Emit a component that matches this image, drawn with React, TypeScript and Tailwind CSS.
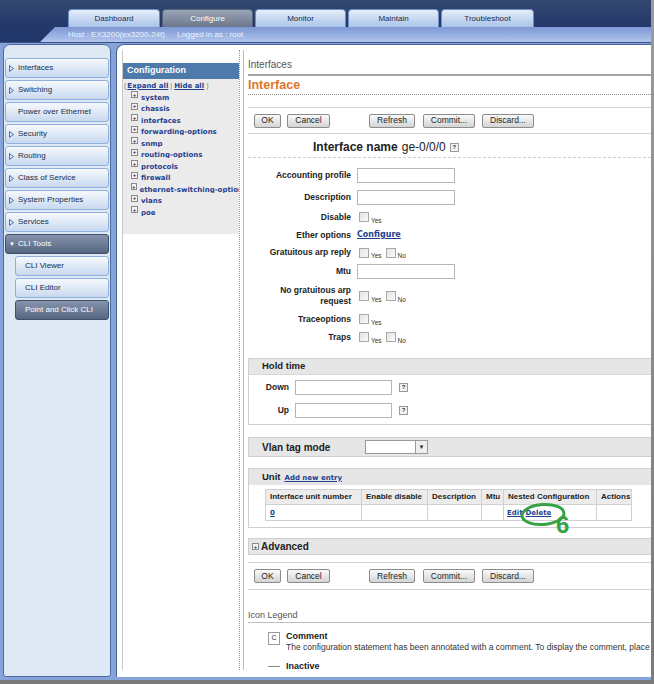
import React from "react";

const tabs = [
  { label: "Dashboard", w: "w-[92px]" },
  { label: "Configure", w: "w-[91px]", active: true },
  { label: "Monitor", w: "w-[91px]" },
  { label: "Maintain", w: "w-[91px]" },
  { label: "Troubleshoot", w: "w-[93px]" },
];

const nav = [
  { label: "Interfaces", arrow: true },
  { label: "Switching", arrow: true },
  { label: "Power over Ethernet" },
  { label: "Security", arrow: true },
  { label: "Routing", arrow: true },
  { label: "Class of Service", arrow: true },
  { label: "System Properties", arrow: true },
  { label: "Services", arrow: true },
];

const tree = [
  "system",
  "chassis",
  "interfaces",
  "forwarding-options",
  "snmp",
  "routing-options",
  "protocols",
  "firewall",
  "ethernet-switching-options",
  "vlans",
  "poe",
];

function RightTri() {
  return (
    <svg width="5" height="7" viewBox="0 0 5 7" className="shrink-0">
      <path d="M0.5 0.5 L4.5 3.5 L0.5 6.5 Z" fill="none" stroke="#4a6fb0" strokeWidth="1" />
    </svg>
  );
}

function NavButton({ label, arrow, active, sub }: { label: string; arrow?: boolean; active?: boolean; sub?: boolean }) {
  return (
    <div
      className={
        "flex h-[20px] items-center rounded-[3px] border text-[8px] " +
        (sub ? "ml-[10px] pl-[9px] " : "pl-[3px] ") +
        (active
          ? "border-[#3e4f6c] bg-gradient-to-b from-[#8695ad] to-[#56667f] text-white"
          : "border-[#8fb0dc] bg-gradient-to-b from-[#f6f9fd] to-[#c8d9ef] text-[#1c2c4c]")
      }
    >
      {arrow && <RightTri />}
      <span className={arrow ? "ml-[4px]" : sub ? "" : "ml-[9px]"}>{label}</span>
    </div>
  );
}

function Btn({ label, w }: { label: string; w: string }) {
  return (
    <div
      className={
        "flex h-[14px] items-center justify-center rounded-[2px] border border-[#8c8c8c] bg-gradient-to-b from-[#fafafa] to-[#d4d4d4] text-[8.5px] text-[#222] " +
        w
      }
    >
      {label}
    </div>
  );
}

function ButtonRow() {
  return (
    <div className="flex items-center pl-[6px]">
      <Btn label="OK" w="w-[27px]" />
      <div className="ml-[6px]">
        <Btn label="Cancel" w="w-[43px]" />
      </div>
      <div className="ml-[39px]">
        <Btn label="Refresh" w="w-[46px]" />
      </div>
      <div className="ml-[8px]">
        <Btn label="Commit..." w="w-[52px]" />
      </div>
      <div className="ml-[7px]">
        <Btn label="Discard..." w="w-[52px]" />
      </div>
    </div>
  );
}

function Help() {
  return (
    <div className="flex h-[9px] w-[9px] items-center justify-center border border-[#9a9a9a] bg-[#f2f2f2] text-[6px] font-bold leading-none text-[#333]">
      ?
    </div>
  );
}

function Check({ label }: { label: string }) {
  return (
    <div className="flex items-end">
      <div className="h-[10px] w-[10px] border border-[#a8a8a8] bg-gradient-to-br from-[#e4e4e4] to-[#fafafa]" />
      <span className="ml-[2px] translate-y-[2px] text-[6.5px] leading-none text-[#333]">{label}</span>
    </div>
  );
}

function Input({ w = "w-[98px]" }: { w?: string }) {
  return <div className={"h-[15px] border border-[#b5b5b5] bg-white " + w} />;
}

function FormRow({ h, label, children }: { h: string; label: React.ReactNode; children?: React.ReactNode }) {
  return (
    <div className={"flex items-center " + h}>
      <div className="w-[103px] text-right text-[8.5px] font-bold leading-[11px] text-[#222]">{label}</div>
      <div className="ml-[6px] flex items-center">{children}</div>
    </div>
  );
}

function Link({ children }: { children: React.ReactNode }) {
  return (
    <span className="font-['DejaVu_Sans',sans-serif] text-[7px] font-bold text-[#1f3f8f] underline">{children}</span>
  );
}

function PlusBox() {
  return (
    <div className="flex h-[7px] w-[7px] items-center justify-center border border-[#8a8a8a] bg-[#f4f4f4] text-[6px] font-bold leading-none text-[#333]">
      +
    </div>
  );
}

export default function App() {
  return (
    <div className="h-[684px] w-[654px] overflow-hidden bg-gradient-to-b from-[#9c9c9c] to-[#7a7a7a] font-['Liberation_Sans',Arial,sans-serif]">
      <div className="flex h-[680px] w-[651px] flex-col bg-[#86a3da]">
        {/* top bar with tabs */}
        <div className="flex h-[27px] items-end gap-[2px] bg-gradient-to-b from-[#34486f] to-[#23386a] pl-[68px]">
          {tabs.map((t) => (
            <div
              key={t.label}
              className={
                "flex h-[18px] items-center justify-center rounded-t-[4px] border border-b-0 text-[8px] " +
                t.w +
                (t.active
                  ? " border-[#55627a] bg-gradient-to-b from-[#9aa5b6] to-[#6a778b] text-white"
                  : " border-[#6f8fc4] bg-gradient-to-b from-[#e6eefa] to-[#a9c3e8] text-[#1b2b4b]")
              }
            >
              {t.label}
            </div>
          ))}
        </div>
        {/* host bar */}
        <div className="h-[15px] bg-[#23386a]">
          <div className="ml-[40px] flex h-full items-center bg-gradient-to-b from-[#7c98d4] to-[#b2c5ec] pl-[28px] text-[8px] text-[#eef3fb] [clip-path:polygon(15px_0,100%_0,100%_100%,0_100%)]">
            <span>Host : EX3200(ex3200-24t)</span>
            <span className="ml-[12px]">Logged in as : root</span>
          </div>
        </div>
        <div className="h-px bg-[#3b5183]" />

        {/* body */}
        <div className="flex min-h-0 flex-1 gap-[5px] pb-[3px] pl-[3px] pt-px">
          {/* sidebar */}
          <div className="flex w-[108px] flex-col gap-[2px] rounded-t-[7px] rounded-b-[3px] border border-[#4d6aa0] bg-[#dfe8f5] px-px pt-[13px]">
            {nav.map((n) => (
              <NavButton key={n.label} label={n.label} arrow={n.arrow} />
            ))}
            <div className="flex h-[20px] items-center rounded-[3px] border border-[#3e4f6c] bg-gradient-to-b from-[#8695ad] to-[#56667f] pl-[3px] text-[8px] text-white">
              <span className="text-[6px]">▼</span>
              <span className="ml-[3px]">CLI Tools</span>
            </div>
            <NavButton label="CLI Viewer" sub />
            <NavButton label="CLI Editor" sub />
            <NavButton label="Point and Click CLI" sub active />
          </div>

          {/* main panel */}
          <div className="flex min-w-0 flex-1 flex-col rounded-tl-[8px] border-l border-t border-[#4a669c] bg-white pb-[7px] pl-[5px] pt-[5px]">
            <div className="flex min-h-0 flex-1 border-l border-[#c8c8c8]">
              {/* configuration tree */}
              <div className="w-[117px] border-r border-dotted border-[#9a9a9a] pt-[13px]">
                <div className="w-[116px]">
                  <div className="flex h-[16px] items-center bg-[#4d7aa8] pl-[4px] text-[9px] font-bold text-white">
                    Configuration
                  </div>
                  <div className="h-[155px] bg-[#ebebeb] pt-[3px]">
                    <div className="flex h-[8px] items-center pl-px text-[7px] text-[#777]">
                      <span>(</span>
                      <span className="ml-px"><Link>Expand all</Link></span>
                      <span className="mx-[2px]">|</span>
                      <Link>Hide all</Link>
                      <span className="ml-[2px]">)</span>
                    </div>
                    <div className="-mt-px">
                      {tree.map((t) => (
                        <div key={t} className="flex h-[11.5px] items-center overflow-hidden whitespace-nowrap pl-[8px]">
                          <PlusBox />
                          <span className="ml-[3px]">
                            <Link>{t}</Link>
                          </span>
                        </div>
                      ))}
                    </div>
                  </div>
                </div>
              </div>

              {/* content */}
              <div className="ml-[3px] min-w-0 flex-1 overflow-hidden border-l border-[#bcbcbc] pl-[4px] pt-[10px]">
                <div className="h-[16px] border-b-2 border-[#a6a6a6] text-[10px] leading-[10px] text-[#555]">
                  Interfaces
                </div>
                <div className="flex h-[19px] items-center border-b border-dotted border-[#8a8a8a] text-[12.5px] font-bold text-[#e0762a]">
                  Interface
                </div>
                <div className="h-[13px] border-b border-[#d4d4d4]" />
                <div className="flex h-[26px] items-center border-b border-[#d4d4d4]">
                  <ButtonRow />
                </div>
                <div className="flex h-[24px] items-center border-b border-dashed border-[#cfcfcf] pl-[65px] pt-[3px] text-[12px] text-[#222]">
                  <span className="font-bold">Interface name</span>
                  <span className="ml-[4px]">ge-0/0/0</span>
                  <span className="ml-[4px]">
                    <Help />
                  </span>
                </div>

                {/* form */}
                <div className="pt-[6px]">
                  <FormRow h="h-[22px]" label="Accounting profile">
                    <Input />
                  </FormRow>
                  <FormRow h="h-[22px]" label="Description">
                    <Input />
                  </FormRow>
                  <FormRow h="h-[18px]" label="Disable">
                    <div className="pl-[2px]">
                      <Check label="Yes" />
                    </div>
                  </FormRow>
                  <FormRow h="h-[18px]" label="Ether options">
                    <Link>
                      <span className="text-[8px]">Configure</span>
                    </Link>
                  </FormRow>
                  <FormRow h="h-[17px]" label="Gratuitous arp reply">
                    <div className="flex gap-[4px] pl-[2px]">
                      <Check label="Yes" />
                      <Check label="No" />
                    </div>
                  </FormRow>
                  <FormRow h="h-[20px]" label="Mtu">
                    <Input />
                  </FormRow>
                  <FormRow
                    h="h-[30px]"
                    label={
                      <>
                        No gratuitous arp
                        <br />
                        request
                      </>
                    }
                  >
                    <div className="flex gap-[4px] pl-[2px]">
                      <Check label="Yes" />
                      <Check label="No" />
                    </div>
                  </FormRow>
                  <FormRow h="h-[16px]" label="Traceoptions">
                    <div className="pl-[2px]">
                      <Check label="Yes" />
                    </div>
                  </FormRow>
                  <FormRow h="h-[20px]" label="Traps">
                    <div className="flex gap-[4px] pl-[2px]">
                      <Check label="Yes" />
                      <Check label="No" />
                    </div>
                  </FormRow>
                </div>

                {/* hold time */}
                <div className="mt-[11px] h-[67px] border border-r-0 border-[#cfcfcf]">
                  <div className="flex h-[16px] items-center border-b border-[#d8d8d8] bg-[#e6e6e6] pl-[13px] text-[9.5px] font-bold text-[#222]">
                    Hold time
                  </div>
                  <div className="flex h-[24px] items-center">
                    <div className="w-[40px] text-right text-[8.5px] font-bold text-[#222]">Down</div>
                    <div className="ml-[6px]">
                      <Input w="w-[97px]" />
                    </div>
                    <div className="ml-[7px]">
                      <Help />
                    </div>
                  </div>
                  <div className="flex h-[22px] items-center">
                    <div className="w-[40px] text-right text-[8.5px] font-bold text-[#222]">Up</div>
                    <div className="ml-[6px]">
                      <Input w="w-[97px]" />
                    </div>
                    <div className="ml-[7px]">
                      <Help />
                    </div>
                  </div>
                </div>

                {/* vlan tag mode */}
                <div className="mt-[12px] flex h-[20px] items-center border border-r-0 border-[#cfcfcf] bg-[#e6e6e6] pl-[13px]">
                  <div className="w-[103px] text-[10px] font-bold text-[#222]">Vlan tag mode</div>
                  <div className="flex h-[14px] w-[63px] border border-[#9a9a9a] bg-white">
                    <div className="flex-1" />
                    <div className="flex w-[12px] items-center justify-center border-l border-[#9a9a9a] bg-[#eeeeee] text-[6px] leading-none text-[#222]">
                      ▼
                    </div>
                  </div>
                </div>

                {/* unit */}
                <div className="relative mt-[11px] h-[60px] border border-r-0 border-[#cfcfcf]">
                  <div className="flex h-[16px] items-center bg-[#e6e6e6] pl-[13px] text-[9.5px] font-bold text-[#222]">
                    Unit
                    <span className="ml-[4px]">
                      <Link>Add new entry</Link>
                    </span>
                  </div>
                  <div className="ml-[16px] mt-[4px]">
                    <table className="border-collapse text-[8px] text-[#222]">
                      <thead>
                        <tr className="h-[15px] bg-[#ececec]">
                          <th className="w-[96px] border border-[#d0d0d0] pl-[4px] text-left font-bold">Interface unit number</th>
                          <th className="w-[66px] border border-[#d0d0d0] pl-[4px] text-left font-bold">Enable disable</th>
                          <th className="w-[54px] border border-[#d0d0d0] pl-[4px] text-left font-bold">Description</th>
                          <th className="w-[22px] border border-[#d0d0d0] pl-[4px] text-left font-bold">Mtu</th>
                          <th className="w-[93px] border border-[#d0d0d0] pl-[4px] text-left font-bold">Nested Configuration</th>
                          <th className="w-[35px] border border-[#d0d0d0] pl-[4px] text-left font-bold">Actions</th>
                        </tr>
                      </thead>
                      <tbody>
                        <tr className="h-[16px]">
                          <td className="border border-[#d0d0d0] pl-[4px]">
                            <Link>0</Link>
                          </td>
                          <td className="border border-[#d0d0d0]" />
                          <td className="border border-[#d0d0d0]" />
                          <td className="border border-[#d0d0d0]" />
                          <td className="border border-[#d0d0d0] pl-[3px]">
                            <Link>Edit</Link>
                            <span className="ml-[3px]">
                              <Link>Delete</Link>
                            </span>
                          </td>
                          <td className="border border-[#d0d0d0]" />
                        </tr>
                      </tbody>
                    </table>
                  </div>
                  <svg className="absolute left-[271px] top-[33px]" width="46" height="25" viewBox="0 0 46 25">
                    <ellipse cx="23" cy="12.5" rx="21" ry="10" fill="none" stroke="#35a343" strokeWidth="3" transform="rotate(-4 23 12.5)" />
                  </svg>
                  <div className="absolute left-[307px] top-[44px] text-[24px] font-bold leading-none text-[#35a343]">6</div>
                </div>

                {/* advanced */}
                <div className="mt-[10px] flex h-[17px] items-center border border-r-0 border-[#cfcfcf] bg-[#e6e6e6] pl-[3px]">
                  <PlusBox />
                  <span className="ml-[2px] text-[10px] font-bold text-[#222]">Advanced</span>
                </div>
                <div className="h-[8px] border-b border-[#d4d4d4]" />
                <div className="flex h-[27px] items-center border-b border-[#d4d4d4]">
                  <ButtonRow />
                </div>

                {/* icon legend */}
                <div className="mt-[19px] h-[14px] border-b border-[#bdbdbd] text-[9px] leading-[12px] text-[#555]">
                  Icon Legend
                </div>
                <div className="mt-[8px] flex pl-[20px]">
                  <div className="mt-[1px] flex h-[13px] w-[12px] shrink-0 items-center justify-center border border-[#9a9a9a] text-[7px] text-[#333]">
                    C
                  </div>
                  <div className="ml-[6px] whitespace-nowrap">
                    <div className="text-[9px] font-bold leading-[11px] text-[#222]">Comment</div>
                    <div className="text-[8.5px] leading-[11px] text-[#333]">
                      The configuration statement has been annotated with a comment. To display the comment, place the cursor over it.
                    </div>
                  </div>
                </div>
                <div className="mt-[7px] flex items-center pl-[20px]">
                  <div className="h-px w-[12px] bg-[#888]" />
                  <div className="ml-[6px] text-[9px] font-bold text-[#222]">Inactive</div>
                </div>
              </div>
            </div>
          </div>
        </div>
      </div>
    </div>
  );
}
